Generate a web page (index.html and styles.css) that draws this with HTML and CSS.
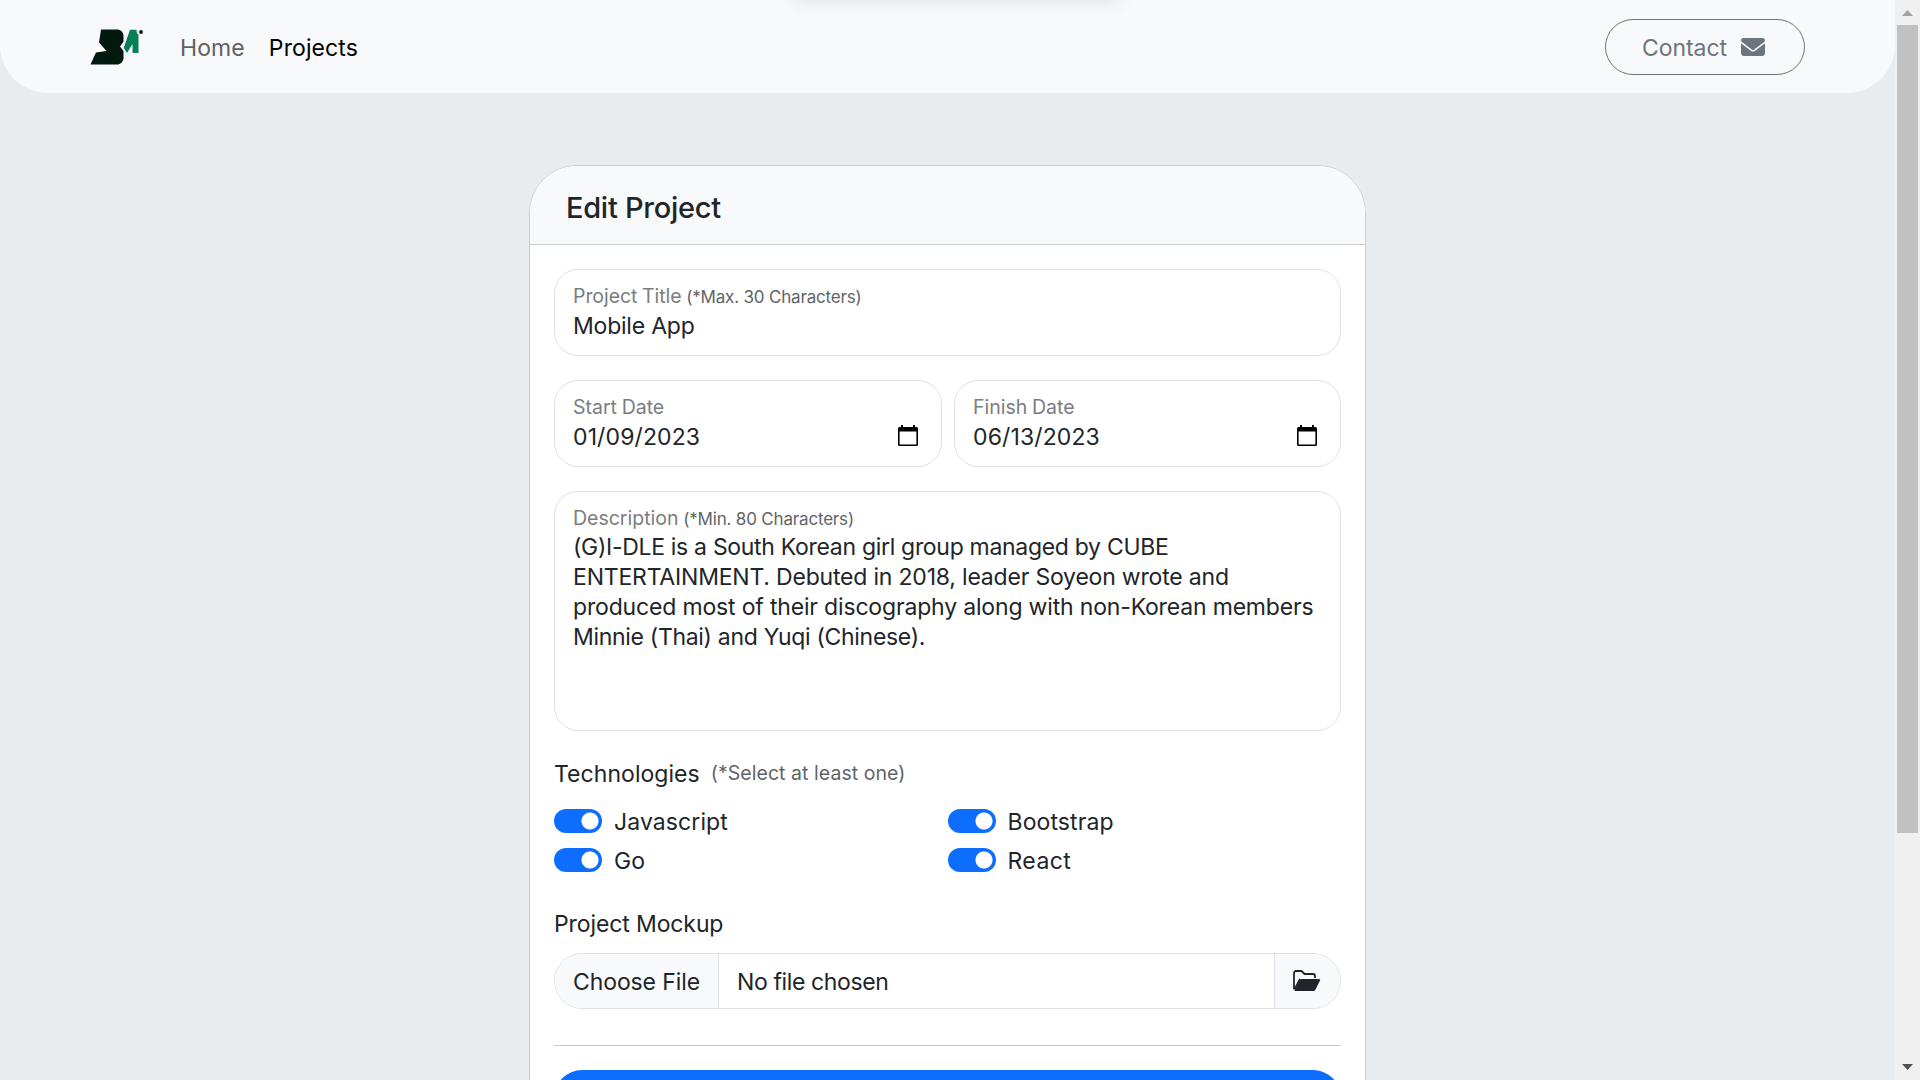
FILE: index.html
```html
<!DOCTYPE html>
<html lang="en">
<head>
<meta charset="utf-8">
<title>Edit Project</title>
<link rel="stylesheet" href="styles.css">
</head>
<body>
<div class="page">
  <div class="content">
    <nav class="navbar">
      <div class="nav-left">
        <svg class="logo" viewBox="0 0 54 36" width="54" height="36">
          <path fill="#03190f" d="M11 .5h17q5 1 5.500 6v6l-3.500 5 3.500 4.500v8q-1 4-5 5.500H.5L6 23.500l10.500-1.500-7.500-8.500z"/>
          <path fill="#077f56" d="M40 .8h6.500q0 4 2 5V24h-6V15L37 24l-3.300-5z"/>
          <circle fill="#03190f" cx="51" cy="3" r="1.900"/>
        </svg>
        <a class="nav-link home"><span>Home</span></a>
        <a class="nav-link active"><span>Projects</span></a>
      </div>
      <a class="contact"><span>Contact</span>
        <svg viewBox="0 0 512 384" width="24" height="18"><path fill="#6c757d" d="M48 0C22 0 0 22 0 48c0 15 7 29 19 38l218 163c11 9 27 9 38 0L493 86c12-9 19-23 19-38 0-26-22-48-48-48zM0 112v208c0 35 29 64 64 64h384c35 0 64-29 64-64V112L294 275c-23 17-53 17-76 0z"/></svg>
      </a>
    </nav>
    <main class="card">
      <header class="card-header"><span>Edit Project</span></header>
      <form class="card-body">
        <div class="field">
          <div class="label"><span class="title-label">Project Title</span> <small>(*Max. 30 Characters)</small></div>
          <div class="value title-value"><span>Mobile App</span></div>
        </div>
        <div class="dates">
          <div class="field">
            <div class="label"><span>Start Date</span></div>
            <div class="value date"><span>01/09/2023</span>
              <svg viewBox="0 0 20 21" width="20" height="21"><path fill="#000" fill-rule="evenodd" d="M3 0h2v2h10V0h2v2h1.500A1.500 1.500 0 0 1 20 3.500v16a1.500 1.500 0 0 1-1.500 1.500h-17A1.500 1.500 0 0 1 0 19.500v-16A1.500 1.500 0 0 1 1.500 2H3zM1.600 6.500v12.900h16.800V6.500z"/></svg>
            </div>
          </div>
          <div class="field">
            <div class="label"><span>Finish Date</span></div>
            <div class="value date"><span>06/13/2023</span>
              <svg viewBox="0 0 20 21" width="20" height="21"><path fill="#000" fill-rule="evenodd" d="M3 0h2v2h10V0h2v2h1.500A1.500 1.500 0 0 1 20 3.500v16a1.500 1.500 0 0 1-1.500 1.500h-17A1.500 1.500 0 0 1 0 19.500v-16A1.500 1.500 0 0 1 1.500 2H3zM1.600 6.500v12.900h16.800V6.500z"/></svg>
            </div>
          </div>
        </div>
        <div class="field description">
          <div class="label"><span>Description</span> <small>(*Min. 80 Characters)</small></div>
          <div class="value">
            <span class="line-1">(G)I-DLE is a South Korean girl group managed by CUBE</span><br>
            <span class="line-2">ENTERTAINMENT. Debuted in 2018, leader Soyeon wrote and</span><br>
            <span class="line-3">produced most of their discography along with non-Korean members</span><br>
            <span class="line-4">Minnie (Thai) and Yuqi (Chinese).</span>
          </div>
        </div>
        <div class="tech-title"><span>Technologies</span><span class="hint">(*Select at least one)</span></div>
        <div class="switches">
          <label class="check"><i class="switch"></i><span>Javascript</span></label>
          <label class="check"><i class="switch"></i><span>Bootstrap</span></label>
          <label class="check"><i class="switch"></i><span>Go</span></label>
          <label class="check react"><i class="switch"></i><span>React</span></label>
        </div>
        <div class="mockup"><span>Project Mockup</span></div>
        <div class="file">
          <div class="choose"><span>Choose File</span></div>
          <div class="chosen"><span>No file chosen</span></div>
          <div class="folder">
            <svg viewBox="0 0 28 21" width="28" height="21"><path fill="none" stroke="#212529" stroke-width="1.800" stroke-linejoin="round" d="M1 19.500V3a2 2 0 0 1 2-2h5.500l3 3H20a2 2 0 0 1 2 2v2M1.500 19.500 7 9"/><path fill="#212529" d="M7.500 9H26a1 1 0 0 1 1 1.500l-4.500 9a2 2 0 0 1-2 1.500H1.500z"/></svg>
          </div>
        </div>
        <hr>
        <div class="submit"></div>
      </form>
    </main>
    <div class="toast-shadow"></div>
  </div>
  <aside class="scrollbar">
    <div class="arrow up"></div>
    <div class="thumb"></div>
    <div class="arrow down"></div>
  </aside>
</div>
</body>
</html>
```

FILE: styles.css
```css
* { box-sizing: border-box; }
body {
  margin: 0;
  font-family: Inter, "Liberation Sans", sans-serif;
  font-size: 23px;
  font-weight: 390;
  line-height: 30px;
  color: #212529;
  background: #e8ecef;
}
.page { display: flex; height: 1080px; overflow: hidden; }
.content { position: relative; width: 1895px; height: 1080px; overflow: hidden; }
span, small { white-space: nowrap; }
.navbar {
  display: flex;
  align-items: center;
  justify-content: space-between;
  height: 93px;
  padding: 1px 90px 0;
  background: #f8f9fb;
  border-radius: 0 0 48px 48px;
}
.nav-left { display: flex; align-items: center; }
.logo { display: block; margin-right: 36px; }
.nav-link { padding-top: 2px; color: #5f6163; margin-right: 24px; letter-spacing: .1px; }
.nav-link.active { color: #000; }
.contact {
  display: flex;
  align-items: center;
  justify-content: space-between;
  width: 200px;
  height: 56px;
  padding: 0 39px 0 36px;
  border: 1px solid #6c757d;
  border-radius: 28px;
  color: #6c757d;
  letter-spacing: -.05px;
}
.contact span { padding-top: 1px; }
.card {
  width: 837px;
  height: 1100px;
  margin: 72px 0 0 529px;
  border: 1px solid #cbced1;
  border-radius: 48px 48px 0 0;
  background: #fff;
  overflow: hidden;
}
.card-header {
  height: 79px;
  padding: 22px 36px 0;
  border-bottom: 1px solid #cbced1;
  background: #f8f9fb;
  font-size: 29px;
  line-height: 40px;
  font-weight: 450;
  letter-spacing: -.27px;
}
.card-body { padding: 24px 24px 0; }
.field {
  height: 87px;
  padding: 12px 18px;
  border: 1px solid #dee2e6;
  border-radius: 24px;
}
.label { height: 28px; font-size: 19.500px; line-height: 29px; color: #797d80; letter-spacing: 0; word-spacing: -.8px; }
.label small { font-size: 17px; color: #5f6468; letter-spacing: -.18px; word-spacing: 0; }
.title-label { letter-spacing: -.06px; }
.title-value { padding-top: 1px; letter-spacing: -.22px; }
.dates { display: grid; grid-template-columns: 388px 387px; gap: 12px; margin: 24px 0; }
.date { display: flex; align-items: flex-start; justify-content: space-between; padding: 1px 5px 0 0; letter-spacing: .12px; }
.date svg { margin-top: 3px; }
.description { height: 240px; }
.line-1 { letter-spacing: -.305px; }
.line-2 { letter-spacing: -.195px; }
.line-3 { letter-spacing: -.17px; }
.line-4 { letter-spacing: -.31px; }
.tech-title { display: flex; gap: 11px; margin-top: 28px; letter-spacing: .05px; }
.hint { font-size: 19.500px; line-height: 28px; color: #5f6468; }
.switches { display: grid; grid-template-columns: 393.500px 1fr; row-gap: 9px; margin-top: 18px; letter-spacing: .1px; }
.react { letter-spacing: .4px; }
.check { display: flex; gap: 12px; height: 30px; }
.switch {
  width: 48px;
  height: 24px;
  margin-top: 2px;
  border-radius: 12px;
  background: radial-gradient(circle at 36px 12px, #fff 8px, #0d6efd 9px);
}
.mockup { margin-top: 33px; letter-spacing: -.11px; }
.file {
  display: flex;
  height: 56px;
  margin-top: 14px;
  border: 1px solid #dee2e6;
  border-radius: 28px;
  line-height: 56px;
  overflow: hidden;
}
.choose { width: 164px; padding-left: 18px; background: #f8f9fb; border-right: 1px solid #dee2e6; letter-spacing: -.1px; }
.chosen { flex: 1; padding-left: 18px; letter-spacing: -.38px; }
.folder { display: flex; align-items: center; width: 66px; padding: 0 0 1px 18px; background: #f8f9fb; border-left: 1px solid #dee2e6; }
hr { height: 1px; margin: 36px 0 24px; border: 0; background: #c8c9ca; }
.submit { height: 57px; border-radius: 28px; background: #0d6efd; }
.toast-shadow {
  position: absolute;
  left: 795px;
  top: -20px;
  width: 325px;
  height: 18px;
  box-shadow: 0 2px 20px rgba(0, 0, 0, .12);
}
.scrollbar { display: flex; flex-direction: column; align-items: center; width: 25px; background: #f0f0f0; }
.thumb { width: 21px; height: 808px; margin-top: 9px; background: #c1c1c1; }
.arrow { width: 11px; height: 6px; }
.up { margin-top: 10px; background: #a3a3a3; clip-path: polygon(50% 0, 100% 100%, 0 100%); }
.down { margin-top: auto; margin-bottom: 10px; background: #505050; clip-path: polygon(0 0, 100% 0, 50% 100%); }
```
